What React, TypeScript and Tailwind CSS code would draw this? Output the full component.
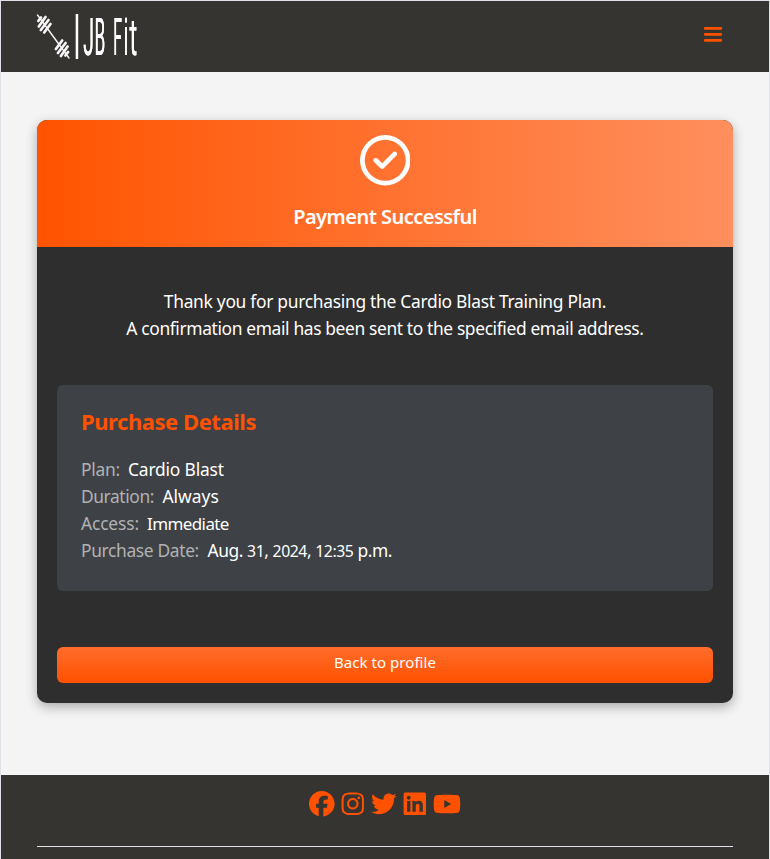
import { FaFacebook, FaInstagram, FaLinkedin, FaRegCircleCheck, FaTwitter, FaYoutube } from "react-icons/fa6";

function Logo() {
  return (
    <svg width="110" height="71" viewBox="36 1 110 71" fill="#fff">
      <g stroke="#f6f6f6" strokeLinecap="round">
        <path d="M37.500 15l31.500 43" strokeWidth="1.400" />
        <path
          d="M38.300 21l2.700-3.500M38.800 26.500l6.700-9.500M40.800 30l7.700-10M44.200 32.500l6.300-8.500M68.100 52l-2.700 3.500M67.600 46.500l-6.700 9.500M65.600 43l-7.700 10M62.200 40.500l-6.300 8.500"
          strokeWidth="2.700"
        />
      </g>
      <rect x="75.700" y="14" width="2.500" height="45" />
      <g fontFamily="Roboto, sans-serif" fontWeight="400" fontSize="51" className="drop-shadow-[0.7px_0_0_#eee]">
        <text transform="translate(83.300 55) scale(.38 1)">J</text>
        <text transform="translate(94.500 55) scale(.34 1)">B</text>
        <text transform="translate(113.300 55) scale(.31 1)">F</text>
        <text transform="translate(123.700 55) scale(.36 1)">i</text>
        <text transform="translate(129.400 55) scale(.46 1)">t</text>
      </g>
    </svg>
  );
}

function MenuIcon() {
  return (
    <svg width="18" height="15" viewBox="0 0 18 15" fill="#ff5100">
      <rect width="18" height="2.700" rx="1" />
      <rect y="6" width="18" height="2.700" rx="1" />
      <rect y="12" width="18" height="2.700" rx="1" />
    </svg>
  );
}

const digits = "text-[15.8px]";

export default function App() {
  return (
    <div className="h-[859px] overflow-hidden border border-b-0 border-[#dfe1e6] bg-[#f4f4f4] font-['Noto_Sans',sans-serif] text-white">
      <header className="flex h-[71px] items-center justify-between bg-[#363430] pr-[47.500px] pl-[35px]">
        <Logo />
        <button aria-label="Menu" className="mb-1"><MenuIcon /></button>
      </header>
      <main className="px-9 pt-12 pb-[72px]">
        <section className="h-[583px] overflow-hidden rounded-[10px] bg-[#2e2e2e] shadow-[0_4px_12px_rgba(0,0,0,0.3)]">
          <div className="flex h-[127px] flex-col items-center bg-linear-to-r/srgb from-[#ff5400] to-[#ff8f5e] pt-[15px]">
            <FaRegCircleCheck size={50.500} />
            <h1 className="mt-[16.500px] text-[20px] leading-[30px] font-semibold tracking-[-0.520px]">Payment Successful</h1>
          </div>
          <div className="px-5 pt-[41px]">
            <p className="text-center text-[17.400px] leading-[27px]">
              <span className="tracking-[-0.290px]">Thank you for purchasing the Cardio Blast Training Plan.</span>
              <br />
              <span className="tracking-[-0.370px]">A confirmation email has been sent to the specified email address.</span>
            </p>
            <div className="mt-[43px] h-[206px] rounded-md bg-[#3e4145] px-6 pt-5">
              <h2 className="text-[22px] leading-[33px] font-bold tracking-[-0.450px] text-[#ff5100]">Purchase Details</h2>
              <dl className="mt-[18px] text-[17.400px] leading-[27px] whitespace-nowrap">
                <div className="flex">
                  <dt className="w-[47px] tracking-[-0.250px] text-[#b0b2b3]">Plan:</dt>
                  <dd className="tracking-[-0.180px]">Cardio Blast</dd>
                </div>
                <div className="flex">
                  <dt className="w-[81.500px] tracking-[-0.420px] text-[#b0b2b3]">Duration:</dt>
                  <dd>Always</dd>
                </div>
                <div className="flex">
                  <dt className="w-[66px] tracking-[-0.150px] text-[#b0b2b3]">Access:</dt>
                  <dd className="text-[17px] tracking-[-0.600px]">Immediate</dd>
                </div>
                <div className="flex">
                  <dt className="w-[126.500px] tracking-[-0.350px] text-[#b0b2b3]">Purchase Date:</dt>
                  <dd className="tracking-[-0.440px]">
                    Aug. <span className={digits}>31</span>, <span className={digits}>2024</span>, <span className={digits}>12:35</span> p.m.
                  </dd>
                </div>
              </dl>
            </div>
            <button className="mt-14 block h-9 w-full rounded-md bg-linear-to-b/srgb from-[#ff6d2b] to-[#ff5100] pb-[5px] text-[15px] tracking-[0.050px]">Back to profile</button>
          </div>
        </section>
      </main>
      <footer className="h-[84px] bg-[#363430] px-9 pt-4">
        <div className="flex h-[26px] items-center justify-center gap-[5.400px] text-[#ff5100]">
          <FaFacebook size={25.600} />
          <FaInstagram size={25.600} />
          <FaTwitter size={25.600} />
          <FaLinkedin size={25.600} />
          <FaYoutube size={28} />
        </div>
        <div className="mt-[29px] h-px bg-[#dfe1e6]" />
      </footer>
    </div>
  );
}
